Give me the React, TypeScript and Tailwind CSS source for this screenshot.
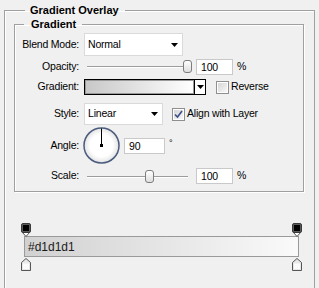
import React from "react";

function Arrow() {
  return (
    <svg width="7" height="4" viewBox="0 0 7 4" className="block">
      <path d="M0 0H7L3.5 4Z" fill="#000" />
    </svg>
  );
}

function Slider({ pos }: { pos: number }) {
  return (
    <div className="relative w-[108px] h-[15px]">
      <div className="absolute left-[3px] right-[4px] top-[7px] h-[2px] border-t border-t-[#9c9c9c] border-b border-b-white" />
      <div
        className="absolute top-[1px] w-[9px] h-[13px] rounded-[3px] border border-[#7d7d7d] bg-linear-to-b from-white to-[#dedede]"
        style={{ left: pos }}
      />
    </div>
  );
}

function NumBox({ value, w }: { value: string; w: string }) {
  return (
    <div className={`${w} h-[16px] bg-white border border-[#c9c9c9] pl-[4px] leading-[14px]`}>
      {value}
    </div>
  );
}

function Check({ checked }: { checked?: boolean }) {
  return (
    <div className="w-[13px] h-[13px] border border-[#8e8f8f] bg-white p-[1px]">
      <div className="w-full h-full bg-linear-to-br from-[#d6d6d6] to-[#f7f7f7] flex items-center justify-center">
        {checked && (
          <svg width="9" height="9" viewBox="0 0 9 9">
            <path d="M1 4.5L3.5 7L8 1" fill="none" stroke="#3c4e89" strokeWidth="1.6" />
          </svg>
        )}
      </div>
    </div>
  );
}

function TopStop() {
  return (
    <svg width="10" height="14" viewBox="0 0 10 14" className="block">
      <path d="M1.5 9.5L5 13.5L8.5 9.5" fill="#fff" stroke="#555" />
      <rect x="0.5" y="0.5" width="9" height="9" rx="1.5" fill="#5a5a5a" stroke="#3a3a3a" />
      <rect x="2" y="2" width="6" height="6" fill="#000" />
    </svg>
  );
}

function BottomStop() {
  return (
    <svg width="10" height="13" viewBox="0 0 10 13" className="block">
      <path d="M5 0.5L9.5 4.5V12.5H0.5V4.5Z" fill="#e8e8e8" stroke="#555" />
      <rect x="2" y="5.5" width="6" height="5.5" fill="#fbfbfb" />
    </svg>
  );
}

export default function App() {
  return (
    <div className="w-[319px] h-[288px] overflow-hidden bg-[#f0f0f0] font-['Liberation_Sans',Arial,sans-serif] text-[10.5px] tracking-[-0.2px] text-black pl-[4px] pt-[3px]">
      <fieldset className="w-[311px] h-[320px] border border-[#a0a0a0] shadow-[inset_1px_1px_0_#fff] pl-[9px] pr-[10px]">
        <legend className="ml-[11px] pl-[5px] pr-[6px] font-bold text-[11px] tracking-normal leading-[14px]">Gradient Overlay</legend>

        <fieldset className="w-[290px] border border-[#a0a0a0] shadow-[inset_1px_1px_0_#fff,1px_1px_0_#fff] pt-[2px] pb-[7px]">
          <legend className="ml-[9px] pl-[7px] pr-[6px] font-bold text-[11px] tracking-normal leading-[14px]">Gradient</legend>

          <div className="flex flex-col">
            {/* Blend Mode */}
            <div className="flex items-center h-[23px]">
              <div className="w-[64px] text-right">Blend Mode:</div>
              <div className="ml-[5px] w-[99px] h-[23px] bg-white border border-[#dadada] flex items-center justify-between pl-[3px] pr-[4px]">
                <span>Normal</span>
                <Arrow />
              </div>
            </div>

            {/* Opacity */}
            <div className="flex items-center h-[15px] mt-[3px]">
              <div className="w-[64px] text-right">Opacity:</div>
              <div className="ml-[5px]">
                <Slider pos={99} />
              </div>
              <div className="ml-[4px]">
                <NumBox value="100" w="w-[37px]" />
              </div>
              <span className="ml-[4px]">%</span>
            </div>

            {/* Gradient */}
            <div className="flex items-center h-[16px] mt-[5px]">
              <div className="w-[64px] text-right">Gradient:</div>
              <div className="ml-[5px] w-[122px] h-[16px] border border-black flex">
                <div className="flex-1 border border-[#9a9a9a] bg-linear-to-r from-[#c8c8c8] to-white" />
                <div className="w-[11px] border-l border-black bg-white flex items-center justify-center">
                  <Arrow />
                </div>
              </div>
              <div className="ml-[10px]">
                <Check />
              </div>
              <span className="ml-[2px]">Reverse</span>
            </div>

            {/* Style */}
            <div className="flex items-center h-[22px] mt-[8px]">
              <div className="w-[64px] text-right">Style:</div>
              <div className="ml-[5px] w-[79px] h-[22px] bg-white border border-[#dadada] flex items-center justify-between pl-[3px] pr-[4px]">
                <span>Linear</span>
                <Arrow />
              </div>
              <div className="ml-[9px]">
                <Check checked />
              </div>
              <span className="ml-[2px]">Align with Layer</span>
            </div>

            {/* Angle */}
            <div className="flex items-center h-[37px] mt-[2px]">
              <div className="w-[64px] text-right">Angle:</div>
              <div className="ml-[4px]">
                <svg width="37" height="37" viewBox="0 0 37 37" className="block">
                  <defs>
                    <radialGradient id="dialg" cx="50%" cy="50%" r="50%">
                      <stop offset="0.65" stopColor="#ffffff" />
                      <stop offset="1" stopColor="#e2e2e2" />
                    </radialGradient>
                  </defs>
                  <circle cx="18.5" cy="18.5" r="17.5" fill="url(#dialg)" stroke="#4b5c7e" strokeWidth="1.5" />
                  <line x1="18.5" y1="18.5" x2="18.5" y2="1.5" stroke="#000" strokeWidth="1" />
                  <rect x="17" y="17" width="3" height="3" fill="#000" />
                </svg>
              </div>
              <div className="ml-[4px]">
                <NumBox value="90" w="w-[41px]" />
              </div>
              <span className="ml-[4px] self-start mt-[10px] text-[9px]">°</span>
            </div>

            {/* Scale */}
            <div className="flex items-center h-[16px] mt-[4px]">
              <div className="w-[64px] text-right">Scale:</div>
              <div className="ml-[5px]">
                <Slider pos={61} />
              </div>
              <div className="ml-[4px]">
                <NumBox value="100" w="w-[37px]" />
              </div>
              <span className="ml-[4px]">%</span>
            </div>
          </div>
        </fieldset>

        {/* Gradient editor */}
        <div className="ml-[7px] mt-[31px] w-[281px]">
          <div className="flex justify-between">
            <TopStop />
            <TopStop />
          </div>
          <div className="mx-[3px] -mt-[1px] h-[21px] border border-[#9a9a9a] bg-linear-to-r from-[#d1d1d1] to-[#fafafa] flex items-center pl-[3px] text-[12px] tracking-normal text-[#1a1a1a]">
            #d1d1d1
          </div>
          <div className="flex justify-between mt-[1px]">
            <BottomStop />
            <BottomStop />
          </div>
        </div>
      </fieldset>
    </div>
  );
}
